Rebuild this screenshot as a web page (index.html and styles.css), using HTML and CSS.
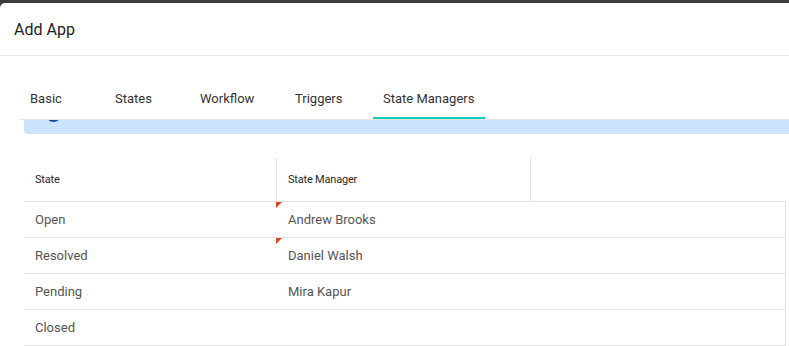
FILE: index.html
```html
<!DOCTYPE html>
<html>
<head>
<meta charset="utf-8">
<link rel="stylesheet" href="styles.css">
</head>
<body>
<div class="modal">
  <div class="modal-header">Add App</div>
  <div class="tabbar">
    <div class="tab tab-basic">Basic</div>
    <div class="tab tab-states">States</div>
    <div class="tab tab-workflow">Workflow</div>
    <div class="tab tab-triggers">Triggers</div>
    <div class="tab active">State Managers</div>
  </div>
  <div class="banner">
    <svg class="info-icon" width="15" height="15" viewBox="0 0 15 15"><circle cx="7.5" cy="7.5" r="7.5" fill="#0f4a9e"/></svg>
  </div>
  <div class="grid">
    <div class="row head">
      <div class="cell hcell divider">State</div>
      <div class="cell hcell divider">State Manager</div>
      <div class="cell hcell"></div>
    </div>
    <div class="row body-row">
      <div class="cell">Open</div>
      <div class="cell dirty">Andrew Brooks</div>
      <div class="cell"></div>
    </div>
    <div class="row body-row">
      <div class="cell">Resolved</div>
      <div class="cell dirty">Daniel Walsh</div>
      <div class="cell"></div>
    </div>
    <div class="row body-row">
      <div class="cell">Pending</div>
      <div class="cell">Mira Kapur</div>
      <div class="cell"></div>
    </div>
    <div class="row body-row">
      <div class="cell">Closed</div>
      <div class="cell"></div>
      <div class="cell"></div>
    </div>
  </div>
</div>
</body>
</html>
```

FILE: styles.css
```css
html, body {
  margin: 0;
  padding: 0;
}
body {
  background: #3b3b3b;
  font-family: Roboto, "Noto Sans", Arial, sans-serif;
  width: 789px;
  height: 346px;
  overflow: hidden;
}
.modal {
  margin-top: 3px;
  background: #ffffff;
  border-top-left-radius: 5px;
  height: 343px;
  overflow: hidden;
}
.modal-header {
  height: 53px;
  box-sizing: border-box;
  border-bottom: 1px solid #e6e6e6;
  display: flex;
  align-items: center;
  padding-left: 14px;
  padding-top: 1px;
  font-size: 16px;
  color: #222222;
}
.tabbar {
  margin-top: 16px;
  margin-left: 20px;
  display: flex;
  border-bottom: 1px solid #e4e4e4;
}
.tab {
  padding: 19px 10px 10px 10px;
  line-height: 16px;
  font-size: 13px;
  color: #333333;
  border-bottom: 2px solid transparent;
  box-sizing: border-box;
}
.tab-basic { width: 85px; }
.tab-states { width: 85px; }
.tab-workflow { width: 95px; }
.tab-triggers { width: 88px; }
.tab.active {
  border-bottom-color: #14ccc0;
  padding-right: 11px;
}
.banner {
  margin-left: 24px;
  height: 14px;
  background: #cbe3fb;
  border-bottom-left-radius: 4px;
  overflow: hidden;
}
.info-icon {
  display: block;
  margin: -13px 0 0 22px;
}
.grid {
  margin: 24px 3px 0 24px;
}
.row {
  display: grid;
  grid-template-columns: 253px 254px 1fr;
  border-bottom: 1px solid #e2e2e2;
  box-sizing: border-box;
}
.head {
  height: 44px;
}
.body-row {
  height: 36px;
  border-right: 1px solid #e2e2e2;
}
.cell {
  padding-left: 11px;
  display: flex;
  align-items: center;
  font-size: 13px;
  color: #555555;
  position: relative;
}
.hcell {
  font-size: 11px;
  font-weight: 400;
  color: #2a2a2a;
  letter-spacing: -0.2px;
}
.divider {
  border-right: 1px solid #e4e4e4;
}
.dirty::before {
  content: "";
  position: absolute;
  left: -1px;
  top: 0;
  width: 0;
  height: 0;
  border-top: 6px solid #e4421c;
  border-right: 6px solid transparent;
}
```
